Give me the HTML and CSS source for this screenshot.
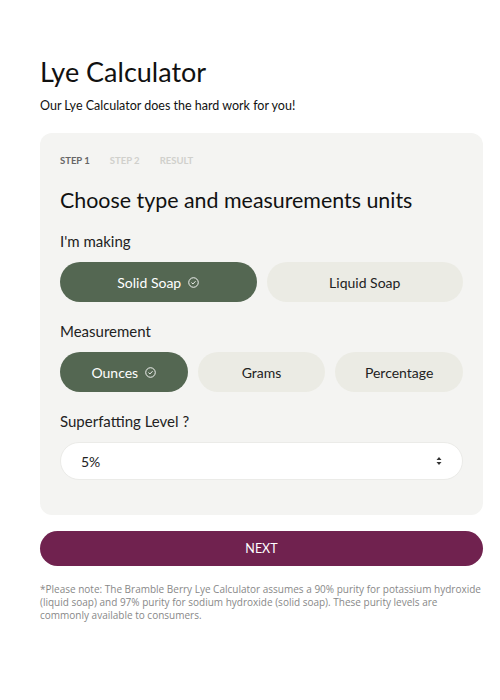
FILE: index.html
```html
<!DOCTYPE html>
<html lang="en">
<head>
    <meta charset="UTF-8">
    <meta name="viewport" content="width=device-width, initial-scale=1.0">
    <title>Lye Calculator</title>
    <link rel="stylesheet" href="styles.css">
</head>
<body>
    <main class="page">
        <h1 class="title">Lye Calculator</h1>
        <p class="intro">Our Lye Calculator does the hard work for you!</p>

        <section class="card">
            <div class="steps">
                <span class="step active">Step 1</span>
                <span class="step">Step 2</span>
                <span class="step">Result</span>
            </div>

            <h2 class="card-title">Choose type and measurements units</h2>

            <p class="label">I'm making</p>
            <div class="options two">
                <button class="option selected">Solid Soap <svg class="check" viewBox="0 0 12 12" width="11" height="11"><circle cx="6" cy="6" r="5.2" fill="none" stroke="currentColor" stroke-width="1"/><path d="M3.8 6.1 L5.4 7.6 L8.2 4.6" fill="none" stroke="currentColor" stroke-width="1"/></svg></button>
                <button class="option">Liquid Soap</button>
            </div>

            <p class="label">Measurement</p>
            <div class="options three">
                <button class="option selected">Ounces <svg class="check" viewBox="0 0 12 12" width="11" height="11"><circle cx="6" cy="6" r="5.2" fill="none" stroke="currentColor" stroke-width="1"/><path d="M3.8 6.1 L5.4 7.6 L8.2 4.6" fill="none" stroke="currentColor" stroke-width="1"/></svg></button>
                <button class="option">Grams</button>
                <button class="option">Percentage</button>
            </div>

            <p class="label">Superfatting Level ?</p>
            <div class="select">
                <span>5%</span>
                <svg viewBox="0 0 6 10" width="6" height="10"><path d="M3 1 L5.5 4 H0.5 Z M3 9 L5.5 6 H0.5 Z" fill="#333"/></svg>
            </div>
        </section>

        <button class="next">NEXT</button>

        <p class="note">*Please note: The Bramble Berry Lye Calculator assumes a 90% purity for potassium hydroxide (liquid soap) and 97% purity for sodium hydroxide (solid soap). These purity levels are commonly available to consumers.</p>
    </main>
</body>
</html>
```

FILE: styles.css
```css
body {
    margin: 0;
    padding: 0;
    background-color: #fff;
    font-family: 'Lato', sans-serif;
    color: #222;
}

.page {
    width: 443px;
    margin-left: 40px;
    padding-top: 55px;
}

.title {
    font-size: 27px;
    font-weight: 400;
    margin: 0;
    line-height: 34px;
    color: #111;
}

.intro {
    font-size: 12.5px;
    margin: 9px 0 20px;
    color: #111;
}

.card {
    background-color: #f4f4f2;
    border-radius: 12px;
    padding: 22px 20px 35px;
}

.steps {
    display: flex;
    gap: 20px;
    font-size: 9.5px;
    font-weight: 700;
    text-transform: uppercase;
    color: #d0d0cc;
    margin-bottom: 21px;
}

.step.active {
    color: #666;
}

.card-title {
    font-size: 21.4px;
    font-weight: 400;
    margin: 0 0 19px;
    color: #111;
}

.label {
    font-size: 15px;
    margin: 0 0 12px;
    color: #222;
}

.options {
    display: grid;
    gap: 10px;
    margin-bottom: 20px;
}

.options.two {
    grid-template-columns: 1fr 1fr;
}

.options.three {
    grid-template-columns: 1fr 1fr 1fr;
}

.option {
    height: 40px;
    border: none;
    border-radius: 20px;
    background-color: #ebebe4;
    font-family: 'Lato', sans-serif;
    font-size: 14px;
    color: #222;
    display: flex;
    align-items: center;
    justify-content: center;
    gap: 7px;
}

.option.selected {
    background-color: #546752;
    color: #fff;
}

.select {
    box-sizing: border-box;
    height: 38px;
    background-color: #fff;
    border: 1px solid #ebebe8;
    border-radius: 20px;
    display: flex;
    align-items: center;
    justify-content: space-between;
    padding: 0 20px;
    font-size: 14px;
}

.next {
    display: block;
    width: 100%;
    height: 35px;
    margin-top: 16px;
    border: none;
    border-radius: 18px;
    background-color: #70224f;
    color: #fff;
    font-family: 'Lato', sans-serif;
    font-size: 12.5px;
}

.note {
    font-family: 'Open Sans', sans-serif;
    font-size: 10px;
    line-height: 13px;
    color: #888;
    margin: 17px 0 0;
}
```
